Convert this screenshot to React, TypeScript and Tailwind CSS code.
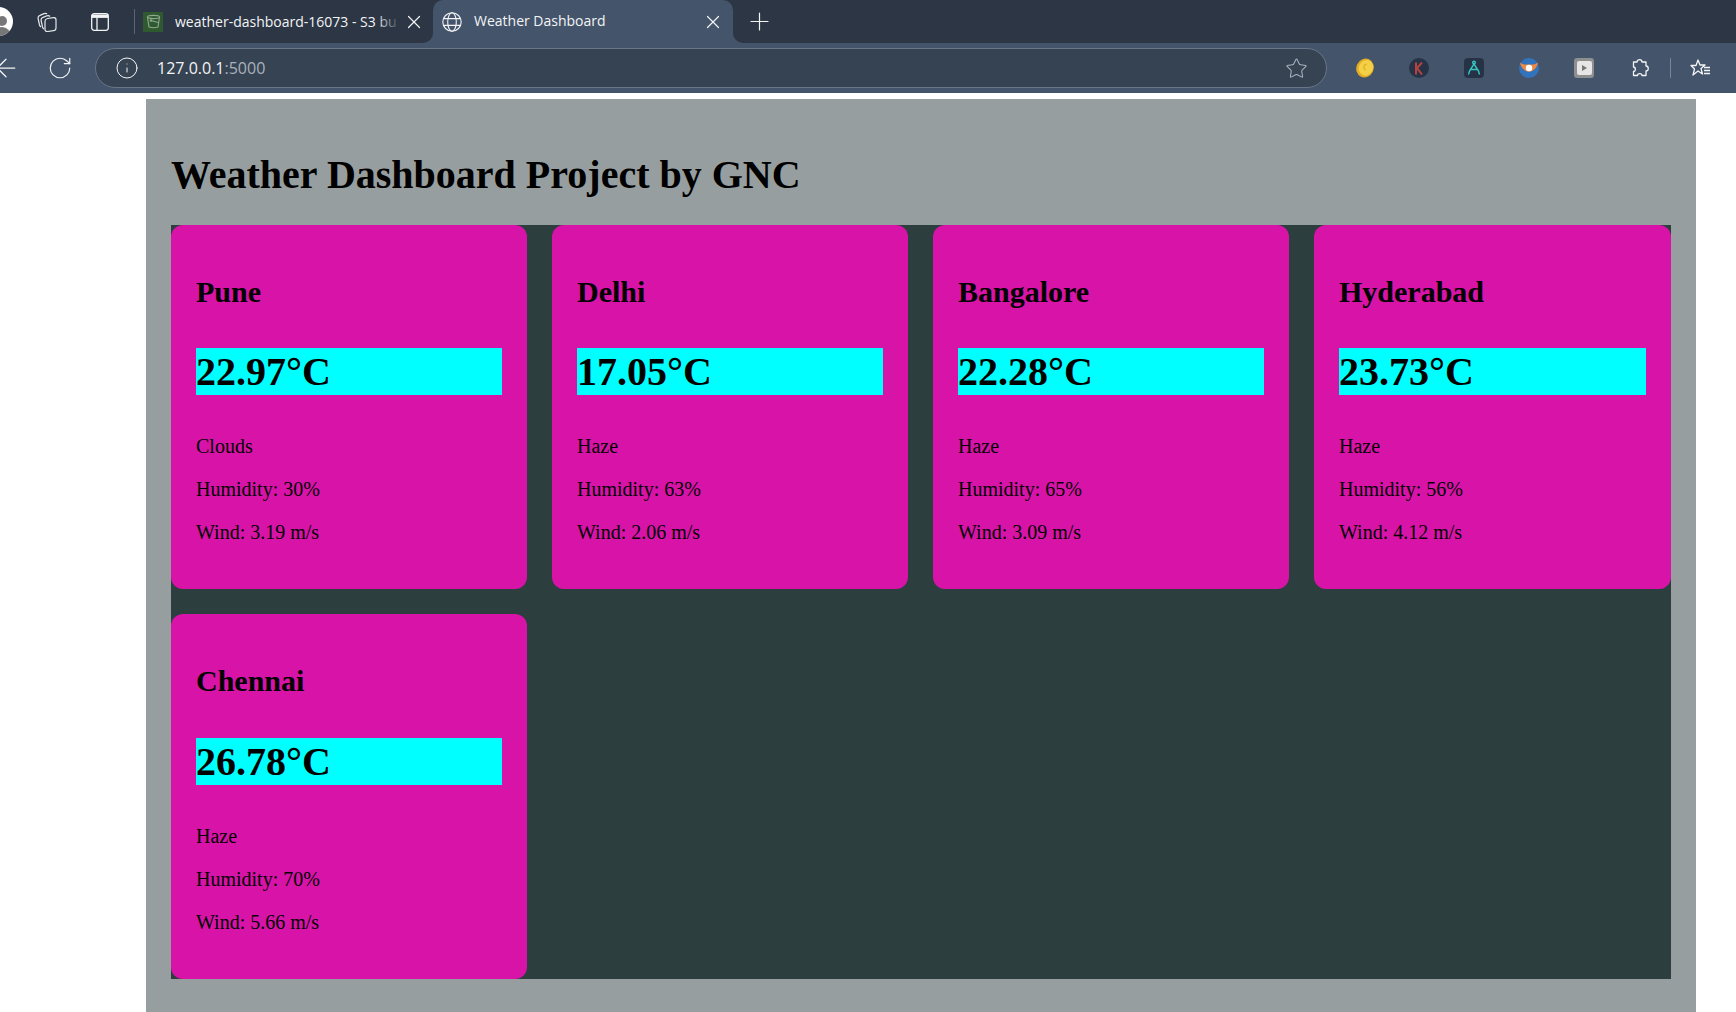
import { ArrowLeft, Info, Plus, RotateCw, Star, X } from 'lucide-react'

const cities = [
  { name: 'Pune', temp: '22.97°C', sky: 'Clouds', humidity: 30, wind: '3.19' },
  { name: 'Delhi', temp: '17.05°C', sky: 'Haze', humidity: 63, wind: '2.06' },
  { name: 'Bangalore', temp: '22.28°C', sky: 'Haze', humidity: 65, wind: '3.09' },
  { name: 'Hyderabad', temp: '23.73°C', sky: 'Haze', humidity: 56, wind: '4.12' },
  { name: 'Chennai', temp: '26.78°C', sky: 'Haze', humidity: 70, wind: '5.66' },
]

function WorkspacesIcon() {
  return (
    <svg width="20" height="20" viewBox="0 0 20 20" fill="none" stroke="#e5e7eb" strokeWidth="1.2" strokeLinejoin="round">
      <path d="M1 6 Q1 4 3 3.4 L7 1.6 Q9 1 10 2" />
      <path d="M1 6 L2.5 13 Q3 14.5 4 15" />
      <path d="M4 8 Q4 6 6 5.4 L10 3.8 Q12 3.4 13 4.5" />
      <path d="M4 8 L5.5 15 Q6 16.5 7 17" />
      <rect x="8" y="6" width="11" height="13" rx="2.5" transform="skewY(-8) translate(0 2)" />
    </svg>
  )
}

function VerticalTabsIcon() {
  return (
    <svg width="18" height="18" viewBox="0 0 18 18" fill="none" stroke="#f3f4f6" strokeWidth="1.3">
      <rect x="0.7" y="0.7" width="16.6" height="16.6" rx="2.5" />
      <path d="M0.7 3.2 H17.3" strokeWidth="3.4" />
      <path d="M6 4.5 V17.3" />
    </svg>
  )
}

function GlobeIcon() {
  return (
    <svg width="20" height="20" viewBox="0 0 20 20" fill="none" stroke="#f3f4f6" strokeWidth="1.1">
      <circle cx="10" cy="10" r="9.2" />
      <ellipse cx="10" cy="10" rx="4.3" ry="9.2" />
      <path d="M1.8 6.6 H18.2 M1.8 13.4 H18.2" />
    </svg>
  )
}

function BucketFavicon() {
  return (
    <div className="w-5 h-5 bg-[#2f5a2f] flex items-center justify-center shrink-0">
      <svg width="15" height="15" viewBox="0 0 15 15" fill="none" stroke="#8fa88f" strokeWidth="1.1">
        <ellipse cx="7.5" cy="3" rx="6" ry="1.6" />
        <path d="M1.5 3 L3 13 Q7.5 14.5 12 13 L13.5 3" />
        <path d="M5 6.5 L12 8.5" />
        <circle cx="5" cy="6.5" r="0.8" />
      </svg>
    </div>
  )
}

function CoinIcon() {
  return (
    <svg width="20" height="20" viewBox="0 0 20 20">
      <ellipse cx="10" cy="10" rx="8.6" ry="9.6" fill="#e2ac27" transform="rotate(25 10 10)" />
      <ellipse cx="10.8" cy="9.4" rx="7" ry="8" fill="#f3d046" transform="rotate(25 10 10)" />
      <path d="M12 6 C8.5 6 8 11 10.5 12" fill="none" stroke="#e3af22" strokeWidth="1.2" />
    </svg>
  )
}

function KIcon() {
  return (
    <div className="w-5 h-5 rounded-full bg-[#263347] flex items-center justify-center">
      <svg width="10" height="13" viewBox="0 0 10 13" fill="none" stroke="#b8423f" strokeWidth="2">
        <path d="M2 0.5 V12.5 M8 0.5 L3 6 L8 12.5" />
      </svg>
    </div>
  )
}

function CompassIcon() {
  return (
    <div className="w-5 h-5 rounded-[4px] bg-[#263347] flex items-center justify-center">
      <svg width="14" height="16" viewBox="0 0 14 16" fill="none" stroke="#37c5c0" strokeWidth="1.4">
        <circle cx="7" cy="2.5" r="1.3" />
        <path d="M7 4 L2.5 11 L1.5 14.5 M7 4 L11.5 11 L12.5 14.5 M3.5 9.5 H10.5" />
      </svg>
    </div>
  )
}

function OrangeIcon() {
  return (
    <svg width="20" height="20" viewBox="0 0 20 20">
      <circle cx="10" cy="10" r="10" fill="#3273bd" />
      <path d="M1 4.5 Q4 7 6.5 6.5 H13.5 Q16 7 19 4.5 Q18 10 14 12.5 Q10 15 6 12.5 Q2 10 1 4.5 Z" fill="#f0883e" />
      <circle cx="10" cy="10" r="3.2" fill="#ffffff" />
    </svg>
  )
}

function PlayerIcon() {
  return (
    <div className="w-5 h-5 rounded-[3px] bg-[#8f8f8f] flex items-center justify-center">
      <div className="w-[15px] h-[14px] bg-[#e6e6e6] rounded-[2px] flex items-center justify-center">
        <svg width="8" height="8" viewBox="0 0 8 8">
          <path d="M2 1 L7 4 L2 7 Z" fill="#777777" />
        </svg>
      </div>
    </div>
  )
}

function PuzzleIcon() {
  return (
    <svg width="20" height="20" viewBox="0 0 20 20" fill="none" stroke="#f3f4f6" strokeWidth="1.3">
      <path d="M7 4 C7 0.8 12 0.8 12 4 H16 V8 C19 8 19 13 16 13 V17.5 H12 C12 15 7.5 15 7.5 17.5 H3.5 V13.5 C6 13.5 6 9 3.5 9 V4 Z" strokeLinejoin="round" />
    </svg>
  )
}

function FavoritesIcon() {
  return (
    <svg width="21" height="20" viewBox="0 0 21 20" fill="none" stroke="#f3f4f6" strokeWidth="1.3">
      <path d="M8 2 L10 7 H15 L11 10.5 L12.5 16 L8 13 L3 17 L4.5 11 L1 7.5 H6 Z" strokeLinejoin="round" />
      <path d="M14 9.5 H20 M14 12.5 H20 M14 15.5 H20" />
    </svg>
  )
}

function BrowserChrome() {
  return (
    <div className="font-['Open_Sans','Noto_Sans',sans-serif]">
      {/* Tab strip */}
      <div className="h-[43px] bg-[#2c3644] flex items-end overflow-hidden">
        <div className="h-[43px] flex items-center w-[134px] shrink-0">
          <div className="w-[29px] h-[29px] -ml-[16px] rounded-full bg-white flex flex-col items-center justify-end overflow-hidden shrink-0">
            <div className="w-[10px] h-[10px] rounded-full bg-[#777777] ml-[6px]" />
            <div className="w-[18px] h-[9px] rounded-t-full bg-[#777777] mt-px ml-[6px]" />
          </div>
          <div className="ml-[24px]"><WorkspacesIcon /></div>
          <div className="ml-[34px]"><VerticalTabsIcon /></div>
        </div>
        <div className="h-[43px] flex items-center w-[299px] shrink-0">
          <div className="w-px h-[25px] bg-[#5b6674]" />
          <div className="ml-[8px]"><BucketFavicon /></div>
          <div className="relative ml-[12px] mb-[2px] w-[226px] overflow-hidden">
            <span className="text-[14px] text-[#f3f4f6] whitespace-nowrap">weather-dashboard-16073 - S3 bu</span>
            <div className="absolute inset-y-0 right-0 w-[26px] bg-gradient-to-r from-transparent to-[#2c3644]" />
          </div>
          <X size={22} className="text-[#f3f4f6] ml-[2px] shrink-0" strokeWidth={1.3} />
        </div>
        <div className="relative h-[43px] w-[300px] bg-[#44546a] rounded-t-[10px] flex items-center shrink-0 pl-[9px] pr-[9px]">
          <div className="absolute bottom-0 -left-[10px] w-[10px] h-[10px] bg-[#44546a]">
            <div className="w-full h-full bg-[#2c3644] rounded-br-[10px]" />
          </div>
          <GlobeIcon />
          <span className="ml-[12px] mb-[2px] text-[14px] text-[#f3f4f6] whitespace-nowrap flex-1">Weather Dashboard</span>
          <X size={22} className="text-[#f3f4f6] shrink-0" strokeWidth={1.3} />
          <div className="absolute bottom-0 -right-[10px] w-[10px] h-[10px] bg-[#44546a]">
            <div className="w-full h-full bg-[#2c3644] rounded-bl-[10px]" />
          </div>
        </div>
        <div className="h-[43px] flex items-center ml-[12px]">
          <Plus size={29} className="text-[#f3f4f6]" strokeWidth={1} />
        </div>
      </div>
      {/* Toolbar */}
      <div className="h-[50px] bg-[#44546a] flex items-center overflow-hidden">
        <ArrowLeft size={30} className="text-[#f3f4f6] -ml-[9px] shrink-0" strokeWidth={1} />
        <RotateCw size={26} className="text-[#f3f4f6] ml-[26px] shrink-0" strokeWidth={1.1} />
        <div className="ml-[22px] w-[1232px] h-[40px] rounded-full bg-[#364352] border border-[#69768a] flex items-center shrink-0 pl-[19px] pr-[18px]">
          <Info size={24} className="text-[#f3f4f6] shrink-0" strokeWidth={1} />
          <span className="ml-[18px] text-[16px] text-[#f3f4f6] flex-1">127.0.0.1<span className="text-[#aab2bd]">:5000</span></span>
          <Star size={23} className="text-[#aab2bd] shrink-0" strokeWidth={1.1} />
        </div>
        <div className="ml-[28px]"><CoinIcon /></div>
        <div className="ml-[34px]"><KIcon /></div>
        <div className="ml-[35px]"><CompassIcon /></div>
        <div className="ml-[35px]"><OrangeIcon /></div>
        <div className="ml-[35px]"><PlayerIcon /></div>
        <div className="ml-[36px]"><PuzzleIcon /></div>
        <div className="ml-[20px] w-px h-[20px] bg-[#7a8698]" />
        <div className="ml-[19px]"><FavoritesIcon /></div>
      </div>
    </div>
  )
}

function CityCard({ city }: { city: (typeof cities)[number] }) {
  return (
    <div className="bg-[#d813a8] rounded-[12px] p-[25px]">
      <h2 className="text-[30px] leading-[34px] font-bold mt-[25px] mb-[39.4px]">{city.name}</h2>
      <div className="bg-[#00ffff] text-[40px] leading-[47px] font-bold">{city.temp}</div>
      <p className="text-[20px] leading-[23px] mt-[40px]">{city.sky}</p>
      <p className="text-[20px] leading-[23px] mt-[20px]">Humidity: {city.humidity}%</p>
      <p className="text-[20px] leading-[23px] my-[20px]">Wind: {city.wind} m/s</p>
    </div>
  )
}

export default function App() {
  return (
    <div className="h-[1012px] overflow-hidden bg-white flex flex-col text-black font-['Liberation_Serif',serif]">
      <BrowserChrome />
      <div className="flex-1 ml-[146px] w-[1550px] mt-[6px] bg-[#979e9f] p-[25px]">
        <h1 className="text-[40px] leading-[46px] font-bold mt-[28px] mb-[27px]">Weather Dashboard Project by GNC</h1>
        <div className="grid grid-cols-[356px_356px_356px_357px] gap-[25px] bg-[#2d3e3e]">
          {cities.map(city => (
            <CityCard key={city.name} city={city} />
          ))}
        </div>
      </div>
    </div>
  )
}
